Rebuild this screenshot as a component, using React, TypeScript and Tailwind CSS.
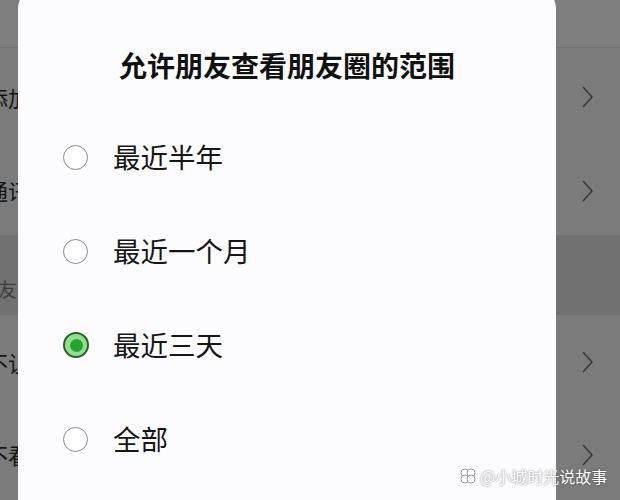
import React from "react";

const rows = [
  { text: "添加我的方式", h: "h-[98px]", chevron: true },
  { text: "通讯录黑名单", h: "h-[89px]", chevron: true },
  { text: "朋友圈", h: "h-[80px]", header: true },
  { text: "不让他看", h: "h-[94px]", chevron: true },
  { text: "不看他", h: "h-[91px]", chevron: true },
];

const options = [
  { label: "最近半年", checked: false },
  { label: "最近一个月", checked: false },
  { label: "最近三天", checked: true },
  { label: "全部", checked: false },
];

function Chevron() {
  return (
    <svg width="12" height="22" viewBox="0 0 12 22" className="mr-[26px]">
      <polyline
        points="1.5,1.5 10,11 1.5,20.5"
        fill="none"
        stroke="#3a3a3a"
        strokeWidth="1.6"
        strokeLinecap="round"
        strokeLinejoin="round"
      />
    </svg>
  );
}

function Radio({ checked }: { checked: boolean }) {
  if (checked) {
    return (
      <div className="flex h-[26px] w-[26px] items-center justify-center rounded-full border-2 border-[#2b5f2b] bg-[#93df8f]">
        <div className="h-[13px] w-[13px] rounded-full bg-[#27a334]" />
      </div>
    );
  }
  return (
    <div className="h-[25px] w-[25px] rounded-full border-[1.5px] border-[#8a8a8a] bg-white" />
  );
}

export default function App() {
  return (
    <div className="relative h-[500px] w-[620px] overflow-hidden bg-[#7b7b7c] font-['Noto_Sans_CJK_SC',sans-serif]">
      {/* settings list behind the dialog */}
      <div className="flex flex-col">
        <div className="h-[48px] border-b border-[#737374] bg-[#7e7e7f]" />
        {rows.map((row) => (
          <div
            key={row.text}
            className={`flex items-center justify-between ${row.h} ${
              row.header ? "bg-[#717172]" : "bg-[#7b7b7c]"
            }`}
          >
            <span
              className={
                row.header
                  ? "ml-[-21px] mt-[28px] text-[19px] text-[#3e3e3e]"
                  : "ml-[-14px] text-[22px] text-[#151515]"
              }
            >
              {row.text}
            </span>
            {row.chevron && <Chevron />}
          </div>
        ))}
      </div>

      {/* dialog */}
      <div className="absolute left-[18px] top-[-10px] h-[540px] w-[538px] rounded-[18px] bg-[#fcfcfe] pt-[61px]">
        <h2 className="text-center text-[28px] leading-[28px] font-bold text-[#111]">
          允许朋友查看朋友圈的范围
        </h2>
        <div className="mt-[31px] flex flex-col">
          {options.map((opt) => (
            <div key={opt.label} className="flex h-[94px] items-center pl-[45px]">
              <div className="flex w-[50px] items-center">
                <Radio checked={opt.checked} />
              </div>
              <span className="text-[27.5px] leading-none text-[#161616]">
                {opt.label}
              </span>
            </div>
          ))}
        </div>
      </div>

      {/* watermark */}
      <div className="absolute left-[458px] top-[465px] flex items-center gap-[2px] text-[16px] leading-[22px] text-white [text-shadow:0_0_2px_rgba(0,0,0,0.55)]">
        <svg width="20" height="20" viewBox="0 0 20 20">
          <g fill="#fff" stroke="#9a9a9a" strokeWidth="1">
            <circle cx="7" cy="7" r="4" />
            <circle cx="13" cy="7" r="4" />
            <circle cx="7" cy="13" r="4" />
            <circle cx="13" cy="13" r="4" />
          </g>
        </svg>
        <span>@小城时光说故事</span>
      </div>
    </div>
  );
}
